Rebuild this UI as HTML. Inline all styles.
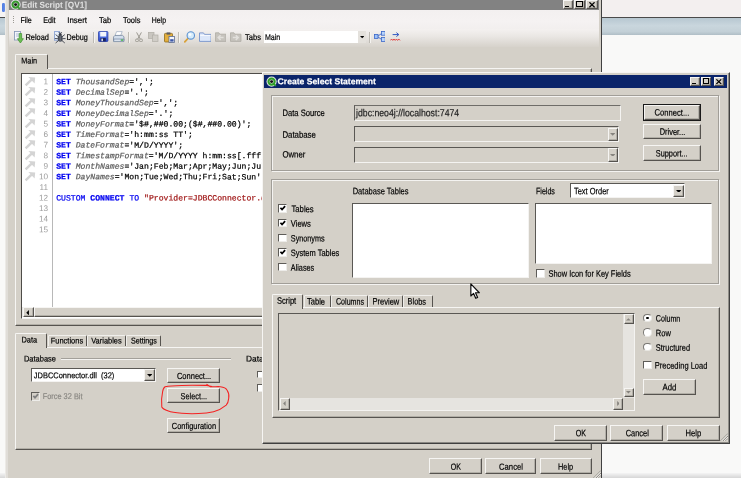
<!DOCTYPE html>
<html><head><meta charset="utf-8"><title>Edit Script [QV1]</title>
<style>

*{margin:0;padding:0;box-sizing:border-box}
html,body{width:741px;height:478px;overflow:hidden;background:#F9F9F8}
body{position:relative}
div,span.t,svg{position:absolute}
div.tl{left:0;top:0;width:741px;height:478px;overflow:hidden;filter:opacity(.999)}
span.t{-webkit-text-stroke:0.2px;white-space:pre;display:block;left:0;top:0;transform-origin:0 0}
.btn{background:#D4D0C8;border-top:1px solid #F6F5F3;border-left:1px solid #F6F5F3;border-bottom:1.3px solid #56534F;border-right:1.3px solid #56534F;box-shadow:inset -0.7px -0.7px 0 #A5A29B}
.sunk{border-top:1.3px solid #5A5854;border-left:1.3px solid #5A5854;border-bottom:1px solid #F4F3F1;border-right:1px solid #F4F3F1}
.grp{border:1px solid #A19E98;box-shadow:inset 1px 1px 0 #F4F3F1, 1px 1px 0 #F4F3F1}
.chk{background:#fff;border-top:1.6px solid #5E5C58;border-left:1.6px solid #5E5C58;border-bottom:1px solid #EDECE9;border-right:1px solid #EDECE9}
.ln{position:absolute;left:0;top:0;transform-origin:0 0;display:block;text-align:right;font:8.2px/10.57px 'Liberation Sans',sans-serif;color:#9C9C9C}
.cl{-webkit-text-stroke:0.22px;position:absolute;left:0;top:0;transform-origin:0 0;display:block;white-space:pre;font:8.15px/10.57px 'Liberation Mono',monospace}
.cl span{position:static}
.rad{background:#fff;border-radius:50%;border:1.1px solid #7A7874;border-bottom-color:#E8E7E3;border-right-color:#E8E7E3}

</style></head><body>
<div style="left:0.00px;top:0.00px;width:741.00px;height:17.00px;background:#F3EFEF"></div><div style="left:0.00px;top:16.60px;width:741.00px;height:1.00px;background:#4A4A4A"></div><div style="left:0.00px;top:17.60px;width:741.00px;height:17.80px;background:linear-gradient(#B7C7D1,#C9D6DD 45%,#C3D0D7 80%,#B0BEC6)"></div><div style="left:0.00px;top:35.40px;width:741.00px;height:437.60px;background:#F9F9F8"></div><div style="left:0.00px;top:473.00px;width:741.00px;height:5.00px;background:linear-gradient(#F4F4F4,#D6D6D6)"></div><div style="left:0.00px;top:0.00px;width:5.40px;height:17.00px;background:#F6F4F4"></div><div style="left:2.20px;top:2.60px;width:3.00px;height:9.80px;background:linear-gradient(90deg,#5D88E6,#3F6FE0 45%,#86A6EE 60%,#4A78E0);border-radius:1.2px"></div>
<div style="left:5.20px;top:-3.00px;width:596.80px;height:483.00px;background:#D4D0C8;border-left:1.2px solid #ECEAE6;border-right:1.2px solid #404040"></div><div style="left:6.40px;top:0.00px;width:1.20px;height:478.00px;background:#E0DDD8"></div><div style="left:9.00px;top:-1.00px;width:590.00px;height:11.30px;background:#828282"></div><svg style="left:9.90px;top:-0.90px" width="11.2" height="11.2" viewBox="-5.6 -5.6 11.2 11.2"><circle r="5.1" fill="#E4E4E8"/><circle r="3.15" fill="#C8C8C8" stroke="#3A9A30" stroke-width="2"/><path d="M2 2.2L4.2 4.3" stroke="#3A9A30" stroke-width="1.7"/><circle r="1.45" fill="#101010"/></svg><div class="btn" style="left:562.80px;top:0.30px;width:10.60px;height:8.90px;"></div><div class="btn" style="left:574.20px;top:0.30px;width:10.60px;height:8.90px;"></div><div class="btn" style="left:586.20px;top:0.30px;width:11.40px;height:8.90px;"></div><div style="left:565.30px;top:6.30px;width:3.90px;height:1.20px;background:#000"></div><div style="left:576.20px;top:1.20px;width:6.60px;height:6.10px;border:1px solid #000;border-top-width:1.7px"></div><svg style="left:588.6px;top:2px" width="6" height="5.6" viewBox="0 0 6 5.6"><path d="M0.4 0.3 L5.6 5.3 M5.6 0.3 L0.4 5.3" stroke="#000" stroke-width="1.25"/></svg><div style="left:9.00px;top:10.30px;width:590.00px;height:18.30px;background:linear-gradient(#F3F0F0,#F5F2F2 60%,#F2EFEE)"></div><div style="left:9.00px;top:28.60px;width:590.00px;height:18.40px;background:linear-gradient(#F4F1F0,#EAE7E4 40%,#D6D2CB)"></div><div style="left:13.00px;top:16.00px;width:1.00px;height:1.00px;background:#9C9A94"></div><div style="left:13.00px;top:17.90px;width:1.00px;height:1.00px;background:#9C9A94"></div><div style="left:13.00px;top:19.80px;width:1.00px;height:1.00px;background:#9C9A94"></div><div style="left:13.00px;top:21.70px;width:1.00px;height:1.00px;background:#9C9A94"></div><svg style="left:14px;top:30.5px" width="10" height="13" viewBox="0 0 10 13"><rect x="0.5" y="0.5" width="6" height="8.5" fill="#F4F6FA" stroke="#7F93B5" stroke-width="0.8"/><path d="M2 3h3M2 5h3" stroke="#8FA3C6" stroke-width="0.7"/><path d="M5.2 2.5h2.4v5.2h1.8L6.4 12 3.4 7.7h1.8z" fill="#6BBF55" stroke="#3F8F2E" stroke-width="0.7"/></svg><svg style="left:53.8px;top:30.6px" width="12" height="13" viewBox="0 0 12 13"><rect x="0.5" y="0.6" width="5.2" height="8.6" fill="#EAF0FA" stroke="#7F9AD0" stroke-width="0.8"/><ellipse cx="6.2" cy="7.4" rx="2.5" ry="3.3" fill="#4A4E58"/><circle cx="6.2" cy="3.4" r="1.5" fill="#3A3E48"/><path d="M1.6 3.6l2.8 2.2M10.8 3.6L8 5.8M0.8 7.6h3M8.6 7.6h3M1.6 12l2.8-2.4M10.8 12L8 9.6M4.8 1l0.9 1.4M7.6 1l-0.9 1.4" stroke="#3A3E48" stroke-width="0.9"/><path d="M6.2 4.6v5.8" stroke="#9AA0AC" stroke-width="0.5"/></svg><svg style="left:98.4px;top:31.4px" width="10.4" height="11" viewBox="0 0 10.4 11"><defs><linearGradient id="sv" x1="0" y1="0" x2="0" y2="1"><stop offset="0" stop-color="#6E8EF0"/><stop offset="1" stop-color="#2A48C8"/></linearGradient></defs><rect x="0.5" y="0.5" width="9.4" height="10" rx="0.8" fill="url(#sv)" stroke="#2A3FA8" stroke-width="0.8"/><rect x="2.2" y="0.9" width="6" height="4.6" fill="#F4F6FC"/><rect x="2.6" y="7" width="5.2" height="3.4" fill="#1A2460"/><rect x="3.4" y="7.6" width="1.5" height="2.6" fill="#E6EAF8"/></svg><svg style="left:113.2px;top:31.2px" width="11.4" height="11.4" viewBox="0 0 11.4 11.4"><path d="M3.6 0.6h5.6l-1.6 4H2z" fill="#FFFFFF" stroke="#8A9AB2" stroke-width="0.6"/><path d="M2 4.4h7.6l1.4 1.4v3.6H0.5V5.9z" fill="#D3DEEC" stroke="#6E7F98" stroke-width="0.7"/><path d="M0.5 8h10.5v2.6H0.5z" fill="#A9BBD2" stroke="#6E7F98" stroke-width="0.6"/><rect x="1.4" y="8.7" width="6" height="1" fill="#F0F4FA"/><rect x="8.1" y="8.5" width="1.9" height="1.2" fill="#3FC030"/></svg><svg style="left:134.6px;top:32px" width="8" height="10.4" viewBox="0 0 8 10.4"><path d="M1.6 0.4L5.2 7M6.4 0.4L2.8 7" stroke="#9A9790" stroke-width="1"/><circle cx="2" cy="8.4" r="1.5" fill="none" stroke="#9A9790" stroke-width="0.9"/><circle cx="6" cy="8.4" r="1.5" fill="none" stroke="#9A9790" stroke-width="0.9"/></svg><svg style="left:148.4px;top:32.4px" width="10.6" height="10" viewBox="0 0 10.6 10"><rect x="0.4" y="0.4" width="5.6" height="6" fill="#C9C6C0" stroke="#B0ADA6" stroke-width="0.7"/><rect x="4.4" y="3" width="5.6" height="6.4" fill="#D0CDC7" stroke="#B0ADA6" stroke-width="0.7"/></svg><svg style="left:164.2px;top:31.6px" width="11.4" height="11" viewBox="0 0 11.4 11"><rect x="0.5" y="1.4" width="8" height="8.6" rx="0.8" fill="#E3AE3C" stroke="#8C6A1C" stroke-width="0.8"/><rect x="2.6" y="0.4" width="3.8" height="2.2" fill="#5A5A62"/><rect x="5" y="4.4" width="5.6" height="6" fill="#F3F5FA" stroke="#5C6C92" stroke-width="0.8"/><rect x="6.2" y="7.2" width="3.4" height="2.4" fill="#3D58A8"/></svg><svg style="left:184.2px;top:31px" width="11.4" height="11.6" viewBox="0 0 11.4 11.6"><path d="M0.8 10.8L4.4 7" stroke="#D9A23A" stroke-width="1.8" stroke-linecap="round"/><circle cx="6.8" cy="4.4" r="3.7" fill="#D6ECFB" stroke="#5E93D1" stroke-width="1.1"/><circle cx="6" cy="3.6" r="1.4" fill="#fff" opacity=".9"/></svg><svg style="left:198.8px;top:32px" width="12.6" height="10" viewBox="0 0 12.6 10"><path d="M0.5 9.4V0.9h4l1 1.5h6.6v7z" fill="#DCE7FA" stroke="#7592C9" stroke-width="0.9"/><path d="M1.2 3.4h10.4" stroke="#fff" stroke-width="0.8"/></svg><svg style="left:214.8px;top:32.2px" width="11.6" height="10" viewBox="0 0 11.6 10"><path d="M0.5 9.4V0.8h3.4l0.9 1.4h6.2v7.2z" fill="#C6C3BD" stroke="#AFACA5" stroke-width="0.8"/><path d="M8.6 5.6H3.4M5.6 3.2L3.2 5.6L5.6 8" stroke="#E2E0DC" stroke-width="1.5" fill="none"/></svg><svg style="left:230px;top:32.2px" width="11.6" height="10" viewBox="0 0 11.6 10"><path d="M0.5 9.4V0.8h3.4l0.9 1.4h6.2v7.2z" fill="#C6C3BD" stroke="#AFACA5" stroke-width="0.8"/><path d="M2.8 5.6H8M5.8 3.2L8.2 5.6L5.8 8" stroke="#E2E0DC" stroke-width="1.5" fill="none"/></svg><svg style="left:373.8px;top:31.2px" width="11.6" height="11" viewBox="0 0 11.6 11"><path d="M3.4 5.5L8 2.2M3.4 5.5L8 8.8" stroke="#3E66C8" stroke-width="0.9"/><rect x="0.4" y="3.4" width="3.6" height="4" fill="#9CC0F6" stroke="#3A66C8" stroke-width="0.8"/><rect x="7.4" y="0.4" width="3.8" height="3.8" fill="#B8D4FA" stroke="#3A66C8" stroke-width="0.8"/><rect x="7.4" y="6.6" width="3.8" height="3.8" fill="#B8D4FA" stroke="#3A66C8" stroke-width="0.8"/></svg><svg style="left:390px;top:32.4px" width="10.6" height="9.6" viewBox="0 0 10.6 9.6"><path d="M2.6 2.6h6M6.4 0.6l2.4 2-2.4 2" stroke="#2F55C0" stroke-width="1" fill="none"/><path d="M0.4 8.4l1.2-1.4 1.2 1.4 1.2-1.4 1.2 1.4 1.2-1.4 1.2 1.4 1.2-1.4 1.2 1.4" stroke="#E02020" stroke-width="0.8" fill="none"/></svg><div style="left:264.00px;top:31.00px;width:102.40px;height:12.30px;background:#fff"></div><div style="left:358.20px;top:31.40px;width:7.80px;height:11.60px;background:#E4E1DC"></div><svg style="left:360.14px;top:36.24px" width="4.32" height="2.32" viewBox="0 0 6 3"><polygon points="0,0 6,0 3,3" fill="#000"/></svg><div style="left:92.75px;top:31.50px;width:0.90px;height:11.50px;background:#BDBAB3"></div><div style="left:93.65px;top:31.50px;width:0.70px;height:11.50px;background:#F4F3F0"></div><div style="left:127.95px;top:31.50px;width:0.90px;height:11.50px;background:#BDBAB3"></div><div style="left:128.85px;top:31.50px;width:0.70px;height:11.50px;background:#F4F3F0"></div><div style="left:178.45px;top:31.50px;width:0.90px;height:11.50px;background:#BDBAB3"></div><div style="left:179.35px;top:31.50px;width:0.70px;height:11.50px;background:#F4F3F0"></div><div style="left:369.35px;top:31.50px;width:0.90px;height:11.50px;background:#BDBAB3"></div><div style="left:370.25px;top:31.50px;width:0.70px;height:11.50px;background:#F4F3F0"></div>
<div style="left:15.40px;top:67.80px;width:576.80px;height:257.80px;border-left:1px solid #F6F5F3;border-top:1px solid #F6F5F3;border-right:1.4px solid #56534F;border-bottom:1.4px solid #56534F;box-shadow:inset -0.8px -0.8px 0 #A5A29B"></div><div style="left:15.40px;top:53.80px;width:32.60px;height:15.20px;background:#D4D0C8;border-left:1px solid #F6F5F3;border-top:1px solid #F6F5F3;border-right:1.3px solid #56534F;border-radius:1.5px 1.5px 0 0"></div><div class="sunk" style="left:21.00px;top:73.00px;width:570.00px;height:245.60px;background:#fff;border-top-width:1.5px;border-left-width:1.6px;border-top-color:#4E4C48;border-left-color:#4E4C48"></div><div style="left:52.15px;top:74.30px;width:0.90px;height:232.50px;background:#B8B8B8"></div><div style="left:22.3px;top:74.3px;width:567px;height:232.6px;overflow:hidden"><div style="left:-22.3px;top:-74.3px;width:800px;height:400px;filter:opacity(.999)"><span class="ln" style="transform:matrix(1,0.0005,0,1,28.4,77.17);width:19.6px">1</span><span class="cl" style="transform:matrix(1,0.0005,0,1,56.2,77.17)"><span style="color:#0000F0;font-weight:bold">SET</span><span style="color:#000"> </span><span style="color:#5C5C5C;font-style:italic">ThousandSep</span><span style="color:#000">=',';</span></span><svg style="left:24px;top:75.70px" width="13" height="12" viewBox="24 -6 13 12"><path d="M25.6 3.4L31.6 -2.4" stroke="#D4D4D4" stroke-width="2.5"/><path d="M28.4 -4.9L35.2 -4.6L34.6 1.6z" fill="#D4D4D4"/></svg><span class="ln" style="transform:matrix(1,0.0005,0,1,28.4,87.74);width:19.6px">2</span><span class="cl" style="transform:matrix(1,0.0005,0,1,56.2,87.74)"><span style="color:#0000F0;font-weight:bold">SET</span><span style="color:#000"> </span><span style="color:#5C5C5C;font-style:italic">DecimalSep</span><span style="color:#000">='.';</span></span><svg style="left:24px;top:86.27px" width="13" height="12" viewBox="24 -6 13 12"><path d="M25.6 3.4L31.6 -2.4" stroke="#D4D4D4" stroke-width="2.5"/><path d="M28.4 -4.9L35.2 -4.6L34.6 1.6z" fill="#D4D4D4"/></svg><span class="ln" style="transform:matrix(1,0.0005,0,1,28.4,98.31);width:19.6px">3</span><span class="cl" style="transform:matrix(1,0.0005,0,1,56.2,98.31)"><span style="color:#0000F0;font-weight:bold">SET</span><span style="color:#000"> </span><span style="color:#5C5C5C;font-style:italic">MoneyThousandSep</span><span style="color:#000">=',';</span></span><svg style="left:24px;top:96.84px" width="13" height="12" viewBox="24 -6 13 12"><path d="M25.6 3.4L31.6 -2.4" stroke="#D4D4D4" stroke-width="2.5"/><path d="M28.4 -4.9L35.2 -4.6L34.6 1.6z" fill="#D4D4D4"/></svg><span class="ln" style="transform:matrix(1,0.0005,0,1,28.4,108.88);width:19.6px">4</span><span class="cl" style="transform:matrix(1,0.0005,0,1,56.2,108.88)"><span style="color:#0000F0;font-weight:bold">SET</span><span style="color:#000"> </span><span style="color:#5C5C5C;font-style:italic">MoneyDecimalSep</span><span style="color:#000">='.';</span></span><svg style="left:24px;top:107.41px" width="13" height="12" viewBox="24 -6 13 12"><path d="M25.6 3.4L31.6 -2.4" stroke="#D4D4D4" stroke-width="2.5"/><path d="M28.4 -4.9L35.2 -4.6L34.6 1.6z" fill="#D4D4D4"/></svg><span class="ln" style="transform:matrix(1,0.0005,0,1,28.4,119.45);width:19.6px">5</span><span class="cl" style="transform:matrix(1,0.0005,0,1,56.2,119.45)"><span style="color:#0000F0;font-weight:bold">SET</span><span style="color:#000"> </span><span style="color:#5C5C5C;font-style:italic">MoneyFormat</span><span style="color:#000">='$#,##0.00;($#,##0.00)';</span></span><svg style="left:24px;top:117.98px" width="13" height="12" viewBox="24 -6 13 12"><path d="M25.6 3.4L31.6 -2.4" stroke="#D4D4D4" stroke-width="2.5"/><path d="M28.4 -4.9L35.2 -4.6L34.6 1.6z" fill="#D4D4D4"/></svg><span class="ln" style="transform:matrix(1,0.0005,0,1,28.4,130.02);width:19.6px">6</span><span class="cl" style="transform:matrix(1,0.0005,0,1,56.2,130.02)"><span style="color:#0000F0;font-weight:bold">SET</span><span style="color:#000"> </span><span style="color:#5C5C5C;font-style:italic">TimeFormat</span><span style="color:#000">='h:mm:ss TT';</span></span><svg style="left:24px;top:128.55px" width="13" height="12" viewBox="24 -6 13 12"><path d="M25.6 3.4L31.6 -2.4" stroke="#D4D4D4" stroke-width="2.5"/><path d="M28.4 -4.9L35.2 -4.6L34.6 1.6z" fill="#D4D4D4"/></svg><span class="ln" style="transform:matrix(1,0.0005,0,1,28.4,140.59);width:19.6px">7</span><span class="cl" style="transform:matrix(1,0.0005,0,1,56.2,140.59)"><span style="color:#0000F0;font-weight:bold">SET</span><span style="color:#000"> </span><span style="color:#5C5C5C;font-style:italic">DateFormat</span><span style="color:#000">='M/D/YYYY';</span></span><svg style="left:24px;top:139.12px" width="13" height="12" viewBox="24 -6 13 12"><path d="M25.6 3.4L31.6 -2.4" stroke="#D4D4D4" stroke-width="2.5"/><path d="M28.4 -4.9L35.2 -4.6L34.6 1.6z" fill="#D4D4D4"/></svg><span class="ln" style="transform:matrix(1,0.0005,0,1,28.4,151.16);width:19.6px">8</span><span class="cl" style="transform:matrix(1,0.0005,0,1,56.2,151.16)"><span style="color:#0000F0;font-weight:bold">SET</span><span style="color:#000"> </span><span style="color:#5C5C5C;font-style:italic">TimestampFormat</span><span style="color:#000">='M/D/YYYY h:mm:ss[.fff] TT';</span></span><svg style="left:24px;top:149.69px" width="13" height="12" viewBox="24 -6 13 12"><path d="M25.6 3.4L31.6 -2.4" stroke="#D4D4D4" stroke-width="2.5"/><path d="M28.4 -4.9L35.2 -4.6L34.6 1.6z" fill="#D4D4D4"/></svg><span class="ln" style="transform:matrix(1,0.0005,0,1,28.4,161.72);width:19.6px">9</span><span class="cl" style="transform:matrix(1,0.0005,0,1,56.2,161.72)"><span style="color:#0000F0;font-weight:bold">SET</span><span style="color:#000"> </span><span style="color:#5C5C5C;font-style:italic">MonthNames</span><span style="color:#000">='Jan;Feb;Mar;Apr;May;Jun;Jul;Aug;Sep;Oct;Nov;Dec';</span></span><svg style="left:24px;top:160.26px" width="13" height="12" viewBox="24 -6 13 12"><path d="M25.6 3.4L31.6 -2.4" stroke="#D4D4D4" stroke-width="2.5"/><path d="M28.4 -4.9L35.2 -4.6L34.6 1.6z" fill="#D4D4D4"/></svg><span class="ln" style="transform:matrix(1,0.0005,0,1,28.4,172.29);width:19.6px">10</span><span class="cl" style="transform:matrix(1,0.0005,0,1,56.2,172.29)"><span style="color:#0000F0;font-weight:bold">SET</span><span style="color:#000"> </span><span style="color:#5C5C5C;font-style:italic">DayNames</span><span style="color:#000">='Mon;Tue;Wed;Thu;Fri;Sat;Sun';</span></span><svg style="left:24px;top:170.83px" width="13" height="12" viewBox="24 -6 13 12"><path d="M25.6 3.4L31.6 -2.4" stroke="#D4D4D4" stroke-width="2.5"/><path d="M28.4 -4.9L35.2 -4.6L34.6 1.6z" fill="#D4D4D4"/></svg><span class="ln" style="transform:matrix(1,0.0005,0,1,28.4,182.87);width:19.6px">11</span><span class="ln" style="transform:matrix(1,0.0005,0,1,28.4,193.44);width:19.6px">12</span><span class="cl" style="transform:matrix(1,0.0005,0,1,56.2,193.44)"><span style="color:#0000F0">CUSTOM</span><span style="color:#000"> </span><span style="color:#0000F0;font-weight:bold">CONNECT</span><span style="color:#000"> </span><span style="color:#0000F0">TO</span><span style="color:#000"> </span><span style="color:#A01818">"Provider=JDBCConnector.dll;jdbc:neo4j://localhost:7474;XUserId=;XPassword=;"</span></span><span class="ln" style="transform:matrix(1,0.0005,0,1,28.4,204.01);width:19.6px">13</span><span class="ln" style="transform:matrix(1,0.0005,0,1,28.4,214.58);width:19.6px">14</span><span class="ln" style="transform:matrix(1,0.0005,0,1,28.4,225.15);width:19.6px">15</span></div></div><div style="left:22.30px;top:306.80px;width:567.70px;height:10.50px;background:#E9E7E3"></div><div class="btn" style="left:33.80px;top:307.20px;width:436.20px;height:10.20px;"></div><div class="btn" style="left:23.20px;top:307.20px;width:10.40px;height:10.20px;"></div><svg style="left:26px;top:309.6px" width="3.2" height="5.4" viewBox="0 0 3 6"><polygon points="3,0 3,6 0,3" fill="#000"/></svg><div style="left:15.40px;top:346.60px;width:576.80px;height:103.80px;border-left:1px solid #F6F5F3;border-top:1px solid #F6F5F3;border-right:1.4px solid #56534F;border-bottom:1.4px solid #56534F;box-shadow:inset -0.8px -0.8px 0 #A5A29B"></div><div style="left:15.40px;top:333.00px;width:32.00px;height:14.80px;background:#D4D0C8;border-left:1px solid #F6F5F3;border-top:1px solid #F6F5F3;border-right:1.3px solid #56534F;border-radius:1.5px 1.5px 0 0"></div><div style="left:47.60px;top:334.70px;width:39.40px;height:11.40px;border-top:1px solid #F0EFEC;border-left:0.8px solid #EEEDEA;border-right:1.3px solid #56534F;border-radius:1px 1.5px 0 0"></div><div style="left:87.00px;top:334.70px;width:39.40px;height:11.40px;border-top:1px solid #F0EFEC;border-left:0.8px solid #EEEDEA;border-right:1.3px solid #56534F;border-radius:1px 1.5px 0 0"></div><div style="left:126.40px;top:334.70px;width:34.80px;height:11.40px;border-top:1px solid #F0EFEC;border-left:0.8px solid #EEEDEA;border-right:1.3px solid #56534F;border-radius:1px 1.5px 0 0"></div><div style="left:61.00px;top:357.85px;width:170.00px;height:0.90px;background:#A3A09A"></div><div style="left:61.00px;top:358.75px;width:170.00px;height:0.90px;background:#F4F3F1"></div><div class="sunk" style="left:31.00px;top:368.00px;width:124.60px;height:14.00px;background:#fff"></div><div class="btn" style="left:144.40px;top:369.30px;width:10.20px;height:11.70px;"></div><svg style="left:146.70px;top:373.85px" width="5.40" height="2.90" viewBox="0 0 6 3"><polygon points="0,0 6,0 3,3" fill="#000"/></svg><div class="chk" style="left:31.00px;top:391.80px;width:8.80px;height:8.80px;background:#D4D0C8"></div><svg style="left:31.00px;top:391.80px" width="8.80" height="8.80" viewBox="0 0 9 9"><path d="M2.4 3.9 L4.1 5.8 L7.3 2.2" fill="none" stroke="#808080" stroke-width="1.8"/></svg><div class="btn" style="left:167.10px;top:367.80px;width:53.30px;height:15.20px;"></div><div class="btn" style="left:167.10px;top:388.20px;width:53.30px;height:15.30px;"></div><div class="btn" style="left:167.10px;top:417.70px;width:53.30px;height:15.60px;"></div><div class="chk" style="left:257.00px;top:370.60px;width:8.00px;height:7.80px;background:#fff"></div><div class="chk" style="left:257.00px;top:384.00px;width:8.00px;height:7.80px;background:#fff"></div><svg style="left:155px;top:380px" width="80" height="40" viewBox="155 380 80 40"><path d="M206.5 384.2 L210.3 386.7 C214 387 217 386.4 220.3 386.7 C224 387.2 226.2 388.4 227 390 C229 393 229.2 396 228.7 398.4 C228.4 401.6 227.6 403.6 226.2 405.1 C222 408.6 218 410.6 213.6 411.8 C208 413.2 203 413.5 198.6 413.5 C192 413.8 186 413.6 181.8 413.2 C176 412.8 171 412.2 168.4 411 C165 409.8 162.4 408.8 161.8 407 C161.2 401 161.6 396 162.6 391.8 C163 389 163.8 387.4 165.1 386.7 C170 385.6 176 385.5 181.8 385.4 C190 385.2 198 385.3 206.9 385.4 L212 386.6" fill="none" stroke="#F42222" stroke-width="1.05"/></svg><svg style="left:593px;top:470px" width="8" height="8" viewBox="0 0 8 8"><path d="M0.5 8L8 0.5M3 8L8 3M5.5 8L8 5.5" stroke="#86837E" stroke-width="0.9"/><path d="M1.4 8L8 1.4M3.9 8L8 3.9M6.4 8L8 6.4" stroke="#F6F5F3" stroke-width="0.7"/></svg><div class="btn" style="left:429.30px;top:458.40px;width:52.50px;height:15.50px;"></div><div class="btn" style="left:484.50px;top:458.40px;width:51.90px;height:15.50px;"></div><div class="btn" style="left:539.60px;top:458.40px;width:52.00px;height:15.50px;"></div>
<div class="tl"><span id="t0" class="t" style="transform:matrix(0.9549,0.0005,0,1,21.80,0.70);font:normal bold 8.6px/9.61px 'Liberation Sans',sans-serif;color:#E2E2E2;-webkit-text-stroke:0">Edit Script [QV1]</span>
<span id="t1" class="t" style="transform:matrix(0.8444,0.0005,0,1,20.40,16.01);font:normal normal 8.4px/9.38px 'Liberation Sans',sans-serif;color:#000;">File</span>
<span id="t2" class="t" style="transform:matrix(0.8589,0.0005,0,1,43.20,16.01);font:normal normal 8.4px/9.38px 'Liberation Sans',sans-serif;color:#000;">Edit</span>
<span id="t3" class="t" style="transform:matrix(0.9402,0.0005,0,1,67.30,16.01);font:normal normal 8.4px/9.38px 'Liberation Sans',sans-serif;color:#000;">Insert</span>
<span id="t4" class="t" style="transform:matrix(0.9101,0.0005,0,1,99.00,16.01);font:normal normal 8.4px/9.38px 'Liberation Sans',sans-serif;color:#000;">Tab</span>
<span id="t5" class="t" style="transform:matrix(0.8895,0.0005,0,1,123.00,16.01);font:normal normal 8.4px/9.38px 'Liberation Sans',sans-serif;color:#000;">Tools</span>
<span id="t6" class="t" style="transform:matrix(0.8239,0.0005,0,1,151.80,16.01);font:normal normal 8.4px/9.38px 'Liberation Sans',sans-serif;color:#000;">Help</span>
<span id="t7" class="t" style="transform:matrix(0.8852,0.0005,0,1,25.40,33.11);font:normal normal 8.4px/9.38px 'Liberation Sans',sans-serif;color:#000;">Reload</span>
<span id="t8" class="t" style="transform:matrix(0.8628,0.0005,0,1,66.60,33.11);font:normal normal 8.4px/9.38px 'Liberation Sans',sans-serif;color:#000;">Debug</span>
<span id="t9" class="t" style="transform:matrix(0.9038,0.0005,0,1,245.00,33.11);font:normal normal 8.4px/9.38px 'Liberation Sans',sans-serif;color:#000;">Tabs</span>
<span id="t10" class="t" style="transform:matrix(0.8427,0.0005,0,1,264.90,33.11);font:normal normal 8.4px/9.38px 'Liberation Sans',sans-serif;color:#000;">Main</span>
<span id="t11" class="t" style="transform:matrix(0.8702,0.0005,0,1,21.30,56.51);font:normal normal 8.4px/9.38px 'Liberation Sans',sans-serif;color:#000;">Main</span>
<span id="t12" class="t" style="transform:matrix(0.8868,0.0005,0,1,21.40,335.51);font:normal normal 8.4px/9.38px 'Liberation Sans',sans-serif;color:#000;">Data</span>
<span id="t13" class="t" style="transform:matrix(0.8950,0.0005,0,1,50.70,336.46);font:normal normal 8.4px/9.38px 'Liberation Sans',sans-serif;color:#000;">Functions</span>
<span id="t14" class="t" style="transform:matrix(0.8893,0.0005,0,1,91.20,336.46);font:normal normal 8.4px/9.38px 'Liberation Sans',sans-serif;color:#000;">Variables</span>
<span id="t15" class="t" style="transform:matrix(0.8558,0.0005,0,1,130.90,336.46);font:normal normal 8.4px/9.38px 'Liberation Sans',sans-serif;color:#000;">Settings</span>
<span id="t16" class="t" style="transform:matrix(0.8952,0.0005,0,1,23.90,354.41);font:normal normal 8.4px/9.38px 'Liberation Sans',sans-serif;color:#000;">Database</span>
<span id="t17" class="t" style="transform:matrix(1.0000,0.0005,0,1,246.00,354.41);font:normal normal 8.4px/9.38px 'Liberation Sans',sans-serif;color:#000;">Data from Files</span>
<span id="t18" class="t" style="transform:matrix(0.8913,0.0005,0,1,33.80,371.21);font:normal normal 8.4px/9.38px 'Liberation Sans',sans-serif;color:#000;">JDBCConnector.dll  (32)</span>
<span id="t19" class="t" style="transform:matrix(0.8814,0.0005,0,1,42.70,392.11);font:normal normal 8.4px/9.38px 'Liberation Sans',sans-serif;color:#8A8883;">Force 32 Bit</span>
<span id="t20" class="t" style="transform:matrix(0.8359,0.0005,0,1,176.90,370.88);font:normal normal 9.0px/10.05px 'Liberation Sans',sans-serif;color:#000;">Connect...</span>
<span id="t21" class="t" style="transform:matrix(0.8119,0.0005,0,1,180.60,391.33);font:normal normal 9.0px/10.05px 'Liberation Sans',sans-serif;color:#000;">Select...</span>
<span id="t22" class="t" style="transform:matrix(0.8273,0.0005,0,1,171.80,420.98);font:normal normal 9.0px/10.05px 'Liberation Sans',sans-serif;color:#000;">Configuration</span>
<span id="t23" class="t" style="transform:matrix(0.7837,0.0005,0,1,450.80,461.63);font:normal normal 9.0px/10.05px 'Liberation Sans',sans-serif;color:#000;">OK</span>
<span id="t24" class="t" style="transform:matrix(0.8567,0.0005,0,1,499.00,461.63);font:normal normal 9.0px/10.05px 'Liberation Sans',sans-serif;color:#000;">Cancel</span>
<span id="t25" class="t" style="transform:matrix(0.8209,0.0005,0,1,558.00,461.63);font:normal normal 9.0px/10.05px 'Liberation Sans',sans-serif;color:#000;">Help</span></div>
<div style="left:261.60px;top:72.00px;width:468.60px;height:371.50px;background:#D4D0C8;border-left:1px solid #F6F5F3;border-top:1px solid #F6F5F3;border-right:1.3px solid #404040;border-bottom:1.3px solid #404040;box-shadow:inset -0.9px -0.9px 0 #8A8883"></div><div style="left:264.20px;top:75.20px;width:462.60px;height:12.40px;background:#0A246A"></div><svg style="left:265.50px;top:75.75px" width="11.2" height="11.2" viewBox="-5.6 -5.6 11.2 11.2"><circle r="5.1" fill="#E4E4E8"/><circle r="3.15" fill="#C8C8C8" stroke="#2FA028" stroke-width="2"/><path d="M2 2.2L4.2 4.3" stroke="#2FA028" stroke-width="1.7"/><circle r="1.45" fill="#101010"/></svg><div class="btn" style="left:690.00px;top:76.60px;width:9.80px;height:9.40px;"></div><div class="btn" style="left:700.80px;top:76.60px;width:10.60px;height:9.40px;"></div><div class="btn" style="left:714.00px;top:76.60px;width:10.20px;height:9.40px;"></div><div style="left:692.40px;top:82.80px;width:4.00px;height:1.20px;background:#000"></div><div style="left:703.20px;top:78.40px;width:5.40px;height:5.40px;border:1px solid #000;border-top-width:1.6px"></div><svg style="left:716.2px;top:78.6px" width="5.6" height="5.4" viewBox="0 0 6 5.6"><path d="M0.4 0.3 L5.6 5.3 M5.6 0.3 L0.4 5.3" stroke="#000" stroke-width="1.25"/></svg><div class="grp" style="left:271.20px;top:95.40px;width:447.40px;height:75.60px;"></div><div style="left:354.00px;top:104.80px;width:266.60px;height:15.80px;border-top:1.1px solid #6F6D69;border-left:1.2px solid #5F5D59;border-bottom:1px solid #F4F3F1;border-right:1px solid #F4F3F1"></div><div class="sunk" style="left:354.00px;top:126.30px;width:265.20px;height:15.90px;background:#D4D0C8"></div><div class="btn" style="left:607.60px;top:127.60px;width:10.60px;height:13.60px;"></div><svg style="left:610.10px;top:133.10px" width="5.40" height="2.90" viewBox="0 0 6 3"><polygon points="0,0 6,0 3,3" fill="#86837E"/></svg><div class="sunk" style="left:354.00px;top:146.80px;width:265.20px;height:15.80px;background:#D4D0C8"></div><div class="btn" style="left:607.60px;top:148.10px;width:10.60px;height:13.50px;"></div><svg style="left:610.10px;top:153.55px" width="5.40" height="2.90" viewBox="0 0 6 3"><polygon points="0,0 6,0 3,3" fill="#86837E"/></svg><div style="left:642.70px;top:104.10px;width:58.40px;height:16.60px;background:#1a1a1a"></div><div class="btn" style="left:643.80px;top:105.20px;width:56.20px;height:14.40px;"></div><div class="btn" style="left:643.00px;top:123.80px;width:57.60px;height:15.50px;"></div><div class="btn" style="left:643.00px;top:145.40px;width:57.60px;height:15.60px;"></div><div class="grp" style="left:271.20px;top:179.20px;width:447.40px;height:105.20px;"></div><div class="sunk" style="left:570.00px;top:183.30px;width:114.60px;height:14.90px;background:#fff"></div><div class="btn" style="left:673.40px;top:184.60px;width:10.20px;height:12.60px;"></div><svg style="left:675.70px;top:189.60px" width="5.40" height="2.90" viewBox="0 0 6 3"><polygon points="0,0 6,0 3,3" fill="#000"/></svg><div class="sunk" style="left:352.00px;top:203.40px;width:176.60px;height:74.40px;background:#fff"></div><div class="sunk" style="left:535.40px;top:203.40px;width:176.80px;height:60.40px;background:#fff"></div><div class="chk" style="left:278.10px;top:204.20px;width:8.90px;height:8.60px;background:#fff"></div><svg style="left:278.10px;top:204.20px" width="8.90" height="8.60" viewBox="0 0 9 9"><path d="M2.4 3.9 L4.1 5.8 L7.3 2.2" fill="none" stroke="#000" stroke-width="1.8"/></svg><div class="chk" style="left:278.10px;top:218.85px;width:8.90px;height:8.60px;background:#fff"></div><svg style="left:278.10px;top:218.85px" width="8.90" height="8.60" viewBox="0 0 9 9"><path d="M2.4 3.9 L4.1 5.8 L7.3 2.2" fill="none" stroke="#000" stroke-width="1.8"/></svg><div class="chk" style="left:278.10px;top:233.50px;width:8.90px;height:8.60px;background:#fff"></div><div class="chk" style="left:278.10px;top:248.15px;width:8.90px;height:8.60px;background:#fff"></div><svg style="left:278.10px;top:248.15px" width="8.90" height="8.60" viewBox="0 0 9 9"><path d="M2.4 3.9 L4.1 5.8 L7.3 2.2" fill="none" stroke="#000" stroke-width="1.8"/></svg><div class="chk" style="left:278.10px;top:262.80px;width:8.90px;height:8.60px;background:#fff"></div><div class="chk" style="left:536.00px;top:268.60px;width:8.80px;height:9.00px;background:#fff"></div><div style="left:271.60px;top:307.40px;width:448.40px;height:111.00px;border-left:1px solid #F6F5F3;border-top:1px solid #F6F5F3;border-right:1.4px solid #56534F;border-bottom:1.4px solid #56534F;box-shadow:inset -0.8px -0.8px 0 #A5A29B"></div><div style="left:271.80px;top:293.60px;width:31.60px;height:15.00px;background:#D4D0C8;border-left:1px solid #F6F5F3;border-top:1px solid #F6F5F3;border-right:1.3px solid #56534F;border-radius:1.5px 1.5px 0 0"></div><div style="left:303.60px;top:295.20px;width:27.80px;height:11.70px;border-top:1px solid #F0EFEC;border-left:0.8px solid #EEEDEA;border-right:1.3px solid #56534F;border-radius:1px 1.5px 0 0"></div><div style="left:331.40px;top:295.20px;width:36.80px;height:11.70px;border-top:1px solid #F0EFEC;border-left:0.8px solid #EEEDEA;border-right:1.3px solid #56534F;border-radius:1px 1.5px 0 0"></div><div style="left:368.20px;top:295.20px;width:35.00px;height:11.70px;border-top:1px solid #F0EFEC;border-left:0.8px solid #EEEDEA;border-right:1.3px solid #56534F;border-radius:1px 1.5px 0 0"></div><div style="left:403.20px;top:295.20px;width:29.60px;height:11.70px;border-top:1px solid #F0EFEC;border-left:0.8px solid #EEEDEA;border-right:1.3px solid #56534F;border-radius:1px 1.5px 0 0"></div><div class="sunk" style="left:278.20px;top:313.00px;width:356.40px;height:97.80px;background:#D4D0C8"></div><div style="left:623.40px;top:314.30px;width:10.30px;height:83.30px;background:#E6E4E0"></div><div class="btn" style="left:623.60px;top:314.40px;width:10.10px;height:9.40px;"></div><div class="btn" style="left:623.60px;top:387.60px;width:10.10px;height:9.40px;"></div><svg style="left:626.2px;top:317.8px" width="4.8" height="2.8" viewBox="0 0 6 3"><polygon points="0,3 6,3 3,0" fill="#86837E"/></svg><svg style="left:626.17px;top:391.30px" width="4.86" height="2.61" viewBox="0 0 6 3"><polygon points="0,0 6,0 3,3" fill="#86837E"/></svg><div style="left:279.50px;top:398.20px;width:343.90px;height:11.60px;background:#E6E4E0"></div><div class="btn" style="left:279.80px;top:398.40px;width:10.20px;height:11.20px;"></div><div class="btn" style="left:612.60px;top:398.40px;width:10.40px;height:11.20px;"></div><svg style="left:283.4px;top:401.4px" width="2.8" height="5" viewBox="0 0 3 6"><polygon points="3,0 3,6 0,3" fill="#86837E"/></svg><svg style="left:616.6px;top:401.4px" width="2.8" height="5" viewBox="0 0 3 6"><polygon points="0,0 0,6 3,3" fill="#86837E"/></svg><div class="rad" style="left:643.40px;top:313.80px;width:8.40px;height:8.40px;"></div><div style="left:646.20px;top:316.60px;width:2.80px;height:2.80px;background:#000;border-radius:50%"></div><div class="rad" style="left:643.40px;top:328.40px;width:8.40px;height:8.40px;"></div><div class="rad" style="left:643.40px;top:342.90px;width:8.40px;height:8.40px;"></div><div class="chk" style="left:643.40px;top:361.00px;width:8.40px;height:8.40px;background:#fff"></div><div class="btn" style="left:643.00px;top:379.20px;width:52.80px;height:15.70px;"></div><div class="btn" style="left:554.30px;top:425.20px;width:52.60px;height:15.40px;"></div><div class="btn" style="left:610.40px;top:425.20px;width:52.80px;height:15.40px;"></div><div class="btn" style="left:667.20px;top:425.20px;width:52.40px;height:15.40px;"></div><svg style="left:720px;top:433px" width="8" height="8" viewBox="0 0 8 8"><path d="M0.5 8L8 0.5M3 8L8 3M5.5 8L8 5.5" stroke="#86837E" stroke-width="0.9"/><path d="M1.4 8L8 1.4M3.9 8L8 3.9M6.4 8L8 6.4" stroke="#F6F5F3" stroke-width="0.7"/></svg><svg style="left:470.2px;top:283px" width="10.6" height="17" viewBox="0 0 10 16"><path d="M0.8 0.8v11.4l2.6-2.4 2 4.6 1.8-0.8-2-4.4h3.6z" fill="#fff" stroke="#0a0a0a" stroke-width="1.1" stroke-linejoin="round"/></svg>
<div class="tl"><span id="t26" class="t" style="transform:matrix(0.9999,0.0005,0,1,277.60,77.20);font:normal bold 8.6px/9.61px 'Liberation Sans',sans-serif;color:#fff;">Create Select Statement</span>
<span id="t27" class="t" style="transform:matrix(0.8203,0.0005,0,1,282.40,107.92);font:normal normal 9.3px/10.39px 'Liberation Sans',sans-serif;color:#000;">Data Source</span>
<span id="t28" class="t" style="transform:matrix(0.8414,0.0005,0,1,282.40,129.82);font:normal normal 9.3px/10.39px 'Liberation Sans',sans-serif;color:#000;">Database</span>
<span id="t29" class="t" style="transform:matrix(0.8397,0.0005,0,1,282.40,149.42);font:normal normal 9.3px/10.39px 'Liberation Sans',sans-serif;color:#000;">Owner</span>
<span id="t30" class="t" style="transform:matrix(0.8554,0.0005,0,1,356.00,107.24);font:normal normal 10.2px/11.39px 'Liberation Sans',sans-serif;color:#222;">jdbc:neo4j://localhost:7474</span>
<span id="t31" class="t" style="transform:matrix(0.8186,0.0005,0,1,654.60,107.62);font:normal normal 9.3px/10.39px 'Liberation Sans',sans-serif;color:#000;">Connect...</span>
<span id="t32" class="t" style="transform:matrix(0.7992,0.0005,0,1,659.70,126.87);font:normal normal 9.3px/10.39px 'Liberation Sans',sans-serif;color:#000;">Driver...</span>
<span id="t33" class="t" style="transform:matrix(0.7888,0.0005,0,1,655.80,148.52);font:normal normal 9.3px/10.39px 'Liberation Sans',sans-serif;color:#000;">Support...</span>
<span id="t34" class="t" style="transform:matrix(0.8076,0.0005,0,1,352.70,186.32);font:normal normal 9.3px/10.39px 'Liberation Sans',sans-serif;color:#000;">Database Tables</span>
<span id="t35" class="t" style="transform:matrix(0.7617,0.0005,0,1,536.00,186.32);font:normal normal 9.3px/10.39px 'Liberation Sans',sans-serif;color:#000;">Fields</span>
<span id="t36" class="t" style="transform:matrix(0.8017,0.0005,0,1,574.00,186.32);font:normal normal 9.3px/10.39px 'Liberation Sans',sans-serif;color:#000;">Text Order</span>
<span id="t37" class="t" style="transform:matrix(0.8260,0.0005,0,1,291.50,204.12);font:normal normal 9.3px/10.39px 'Liberation Sans',sans-serif;color:#000;">Tables</span>
<span id="t38" class="t" style="transform:matrix(0.8157,0.0005,0,1,290.80,218.77);font:normal normal 9.3px/10.39px 'Liberation Sans',sans-serif;color:#000;">Views</span>
<span id="t39" class="t" style="transform:matrix(0.7787,0.0005,0,1,290.80,233.42);font:normal normal 9.3px/10.39px 'Liberation Sans',sans-serif;color:#000;">Synonyms</span>
<span id="t40" class="t" style="transform:matrix(0.8044,0.0005,0,1,290.80,248.07);font:normal normal 9.3px/10.39px 'Liberation Sans',sans-serif;color:#000;">System Tables</span>
<span id="t41" class="t" style="transform:matrix(0.7804,0.0005,0,1,290.80,262.72);font:normal normal 9.3px/10.39px 'Liberation Sans',sans-serif;color:#000;">Aliases</span>
<span id="t42" class="t" style="transform:matrix(0.7993,0.0005,0,1,548.50,268.72);font:normal normal 9.3px/10.39px 'Liberation Sans',sans-serif;color:#000;">Show Icon for Key Fields</span>
<span id="t43" class="t" style="transform:matrix(0.8121,0.0005,0,1,276.90,295.72);font:normal normal 9.3px/10.39px 'Liberation Sans',sans-serif;color:#000;">Script</span>
<span id="t44" class="t" style="transform:matrix(0.8096,0.0005,0,1,307.00,296.62);font:normal normal 9.3px/10.39px 'Liberation Sans',sans-serif;color:#000;">Table</span>
<span id="t45" class="t" style="transform:matrix(0.7632,0.0005,0,1,336.00,296.62);font:normal normal 9.3px/10.39px 'Liberation Sans',sans-serif;color:#000;">Columns</span>
<span id="t46" class="t" style="transform:matrix(0.8102,0.0005,0,1,372.50,296.62);font:normal normal 9.3px/10.39px 'Liberation Sans',sans-serif;color:#000;">Preview</span>
<span id="t47" class="t" style="transform:matrix(0.7909,0.0005,0,1,407.60,296.62);font:normal normal 9.3px/10.39px 'Liberation Sans',sans-serif;color:#000;">Blobs</span>
<span id="t48" class="t" style="transform:matrix(0.7645,0.0005,0,1,655.80,313.62);font:normal normal 9.3px/10.39px 'Liberation Sans',sans-serif;color:#000;">Column</span>
<span id="t49" class="t" style="transform:matrix(0.8114,0.0005,0,1,655.80,328.22);font:normal normal 9.3px/10.39px 'Liberation Sans',sans-serif;color:#000;">Row</span>
<span id="t50" class="t" style="transform:matrix(0.7997,0.0005,0,1,655.80,342.72);font:normal normal 9.3px/10.39px 'Liberation Sans',sans-serif;color:#000;">Structured</span>
<span id="t51" class="t" style="transform:matrix(0.8090,0.0005,0,1,654.70,360.62);font:normal normal 9.3px/10.39px 'Liberation Sans',sans-serif;color:#000;">Preceding Load</span>
<span id="t52" class="t" style="transform:matrix(0.8400,0.0005,0,1,662.50,382.37);font:normal normal 9.3px/10.39px 'Liberation Sans',sans-serif;color:#000;">Add</span>
<span id="t53" class="t" style="transform:matrix(0.7665,0.0005,0,1,575.80,428.22);font:normal normal 9.3px/10.39px 'Liberation Sans',sans-serif;color:#000;">OK</span>
<span id="t54" class="t" style="transform:matrix(0.7978,0.0005,0,1,625.70,428.22);font:normal normal 9.3px/10.39px 'Liberation Sans',sans-serif;color:#000;">Cancel</span>
<span id="t55" class="t" style="transform:matrix(0.8157,0.0005,0,1,685.60,428.22);font:normal normal 9.3px/10.39px 'Liberation Sans',sans-serif;color:#000;">Help</span></div>
</body></html>
